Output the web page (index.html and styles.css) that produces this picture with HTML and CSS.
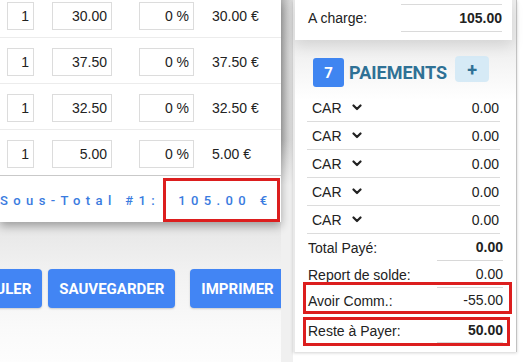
FILE: index.html
```html
<!DOCTYPE html>
<html lang="fr">
<head>
<meta charset="utf-8">
<title>Paiements</title>
<link rel="stylesheet" href="styles.css">
</head>
<body>
<div class="screen">
  <div class="left">
    <div class="card">
      <div class="lines">
        <div class="row">
          <div class="field f-qty">1</div>
          <div class="field f-price">30.00</div>
          <div class="field f-disc">0 %</div>
          <div class="line-total">30.00 €</div>
        </div>
        <div class="row">
          <div class="field f-qty">1</div>
          <div class="field f-price">37.50</div>
          <div class="field f-disc">0 %</div>
          <div class="line-total">37.50 €</div>
        </div>
        <div class="row">
          <div class="field f-qty">1</div>
          <div class="field f-price">32.50</div>
          <div class="field f-disc">0 %</div>
          <div class="line-total">32.50 €</div>
        </div>
        <div class="row row-last">
          <div class="field f-qty">1</div>
          <div class="field f-price">5.00</div>
          <div class="field f-disc">0 %</div>
          <div class="line-total">5.00 €</div>
        </div>
      </div>
      <div class="subtotal">
        <span class="st-label">Sous-Total #1:</span>
        <span class="st-box">105.00 €</span>
      </div>
    </div>
    <div class="actions">
      <button class="btn btn-cancel">ANNULER</button>
      <button class="btn btn-save">SAUVEGARDER</button>
      <button class="btn">IMPRIMER</button>
    </div>
  </div>
  <div class="divider"></div>
  <div class="panel">
    <div class="charge-card">
      <div class="charge-row">
        <span class="charge-label">A charge:</span>
        <span class="charge-value">105.00</span>
      </div>
    </div>
    <div class="pay-head">
      <span class="badge">7</span>
      <span class="pay-title">PAIEMENTS</span>
      <span class="add">+</span>
    </div>
    <div class="pay-list">
      <div class="pay-row"><span>CAR</span><svg class="chev" viewBox="0 0 10 7"><polyline points="1.5,1.5 5,5 8.5,1.5"/></svg><span class="pay-amt">0.00</span></div>
      <div class="pay-row"><span>CAR</span><svg class="chev" viewBox="0 0 10 7"><polyline points="1.5,1.5 5,5 8.5,1.5"/></svg><span class="pay-amt">0.00</span></div>
      <div class="pay-row"><span>CAR</span><svg class="chev" viewBox="0 0 10 7"><polyline points="1.5,1.5 5,5 8.5,1.5"/></svg><span class="pay-amt">0.00</span></div>
      <div class="pay-row"><span>CAR</span><svg class="chev" viewBox="0 0 10 7"><polyline points="1.5,1.5 5,5 8.5,1.5"/></svg><span class="pay-amt">0.00</span></div>
      <div class="pay-row"><span>CAR</span><svg class="chev" viewBox="0 0 10 7"><polyline points="1.5,1.5 5,5 8.5,1.5"/></svg><span class="pay-amt">0.00</span></div>
    </div>
    <div class="summary">
      <div class="sum-row"><span class="sum-label">Total Payé:</span><span class="sum-value strong">0.00</span></div>
      <div class="sum-row"><span class="sum-label">Report de solde:</span><span class="sum-value">0.00</span></div>
      <div class="sum-row sum-avoir"><span class="sum-label">Avoir Comm.:</span><span class="sum-value">-55.00</span></div>
      <div class="sum-row sum-reste"><span class="sum-label">Reste à Payer:</span><span class="sum-value strong">50.00</span></div>
      <div class="mark mark-avoir"></div>
      <div class="mark mark-reste"></div>
    </div>
  </div>
</div>
</body>
</html>
```
FILE: styles.css
```css
* { box-sizing: border-box; }

body {
  margin: 0;
  width: 523px;
  height: 362px;
  overflow: hidden;
  background: #fff;
  font-family: "Liberation Sans", Arial, sans-serif;
  font-size: 14px;
  color: #222;
}

.screen {
  display: flex;
  height: 362px;
}

/* ---------- left: invoice lines ---------- */
.left {
  width: 281px;
  flex: none;
  background: linear-gradient(to bottom, #e6e6e6 222px, #f1f1f1 270px, #fafafa 330px, #fdfdfd 362px);
}

.card {
  background: #fff;
  overflow: hidden;
  box-shadow: 0 4px 9px rgba(0, 0, 0, 0.32);
  position: relative;
  z-index: 1;
}

.lines {
  margin-top: -8px;
}

.row {
  display: flex;
  align-items: flex-start;
  height: 46px;
  padding: 10px 0 0 7px;
  border-bottom: 1px solid #ececec;
}

.row-last {
  border-bottom-color: #c9c9c9;
}

.field {
  height: 28px;
  border: 1px solid #dcdcdc;
  display: flex;
  align-items: center;
  justify-content: flex-end;
  padding-right: 4px;
  background: #fff;
}

.f-qty { width: 27px; }
.f-price { width: 60px; margin-left: 18px; }
.f-disc { width: 55px; margin-left: 27px; }

.line-total {
  margin-left: 18px;
  line-height: 28px;
}

.subtotal {
  display: flex;
  justify-content: flex-end;
  align-items: center;
  height: 46px;
  padding: 2px 1px 0 0;
  font-family: Roboto, "Liberation Sans", sans-serif;
  font-weight: 500;
  font-size: 13px;
  letter-spacing: 5.4px;
  color: #3a7be0;
}

.st-label {
  margin-right: 3px;
  white-space: nowrap;
}

.st-box {
  align-self: stretch;
  width: 117px;
  border: 3px solid #dc1e1e;
  display: flex;
  align-items: center;
  padding-left: 12px;
  white-space: nowrap;
}

.actions {
  display: flex;
  padding-top: 47px;
  margin-left: -47px;
}

.btn {
  height: 39px;
  padding: 0 11px;
  border: 0;
  border-radius: 4px;
  background: #4285f4;
  color: #fff;
  font-family: Roboto, "Liberation Sans", sans-serif;
  font-weight: 700;
  font-size: 15px;
  white-space: nowrap;
  box-shadow: 0 1px 2px rgba(0, 0, 0, 0.18);
}

.btn-cancel { margin-right: 6px; }
.btn-save { margin-right: 15px; }

/* ---------- divider ---------- */
.divider {
  width: 12px;
  flex: none;
  background:
    linear-gradient(to bottom, rgba(240, 240, 240, 0) 0, rgba(240, 240, 240, 0) 140px, #f0f0f0 185px),
    linear-gradient(to right, #b4b4b4, #d0d0d0 60%, #e0e0e0);
}

/* ---------- right panel ---------- */
.panel {
  width: 224px;
  flex: none;
  height: 352px;
  border-left: 2px solid #e9e9e9;
  border-right: 1px solid #c2c2c2;
  background: linear-gradient(to bottom, #ececec 0, #ececec 40px, #f6f6f6 70px, #fff 100px);
  box-shadow: 0 1px 3px rgba(0, 0, 0, 0.18);
}

.charge-card {
  width: 217px;
  background: #fff;
  padding: 4px 10px 8px 13px;
  box-shadow: 0 6px 14px rgba(0, 0, 0, 0.1);
  position: relative;
  z-index: 1;
}

.charge-row {
  display: flex;
  justify-content: space-between;
  align-items: center;
}

.charge-value {
  width: 101px;
  height: 28px;
  border-top: 1px solid #dadada;
  border-bottom: 1px solid #dadada;
  display: flex;
  align-items: center;
  justify-content: flex-end;
  font-weight: 700;
}

.pay-head {
  display: flex;
  align-items: center;
  height: 29px;
  margin-top: 18px;
  padding-left: 18px;
}

.badge {
  width: 31px;
  height: 29px;
  border-radius: 3px;
  background: #3f85f1;
  color: #fff;
  display: flex;
  align-items: center;
  justify-content: center;
  font-family: Roboto, "Liberation Sans", sans-serif;
  font-weight: 700;
  font-size: 15px;
}

.pay-title {
  margin-left: 5px;
  font-family: Roboto, "Liberation Sans", sans-serif;
  font-weight: 700;
  font-size: 18px;
  color: #2f7195;
}

.add {
  align-self: flex-start;
  margin-top: -2px;
  margin-left: 8px;
  width: 34px;
  height: 26px;
  border-radius: 4px;
  background: #d6eaf6;
  color: #2f7195;
  display: flex;
  align-items: center;
  justify-content: center;
  font-family: Roboto, "Liberation Sans", sans-serif;
  font-weight: 700;
  font-size: 18px;
}

.pay-list {
  margin-top: 7px;
}

.pay-row {
  display: flex;
  align-items: center;
  height: 28px;
  margin: 0 16px 0 12px;
  padding: 0 1px 0 5px;
  border-bottom: 1px solid #dcdcdc;
}

.chev {
  width: 10px;
  height: 7px;
  margin-left: 10px;
  fill: none;
  stroke: #222;
  stroke-width: 2.2;
  stroke-linecap: round;
  stroke-linejoin: round;
}

.pay-amt {
  margin-left: auto;
}

.summary {
  position: relative;
}

.sum-row {
  display: flex;
  justify-content: space-between;
  height: 27px;
  margin: 0 13px;
}

.sum-label {
  display: flex;
  align-items: center;
}

.sum-value {
  width: 66px;
  display: flex;
  align-items: center;
  justify-content: flex-end;
  border-bottom: 1px solid #d8d8d8;
}

.strong { font-weight: 700; }

.sum-avoir { height: 25px; }
.sum-reste { height: 30px; padding-top: 5px; }

.mark {
  position: absolute;
  left: 8px;
  border: 3px solid #dc1e1e;
}

.mark-avoir { top: 48px; width: 209px; height: 32px; }
.mark-reste { top: 83px; width: 207px; height: 29px; }
```
